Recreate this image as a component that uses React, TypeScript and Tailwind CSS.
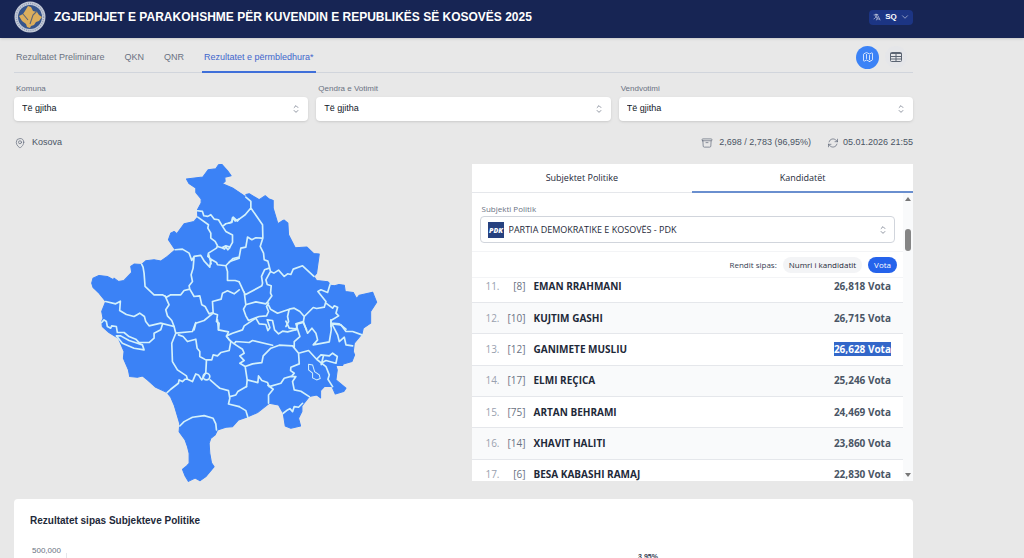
import React, { useState } from 'react';
import {
  HiOutlineArchiveBox,
  HiOutlineArrowPath,
  HiOutlineChevronDown,
  HiOutlineChevronUpDown,
  HiOutlineLanguage,
  HiOutlineMap,
  HiOutlineMapPin,
} from 'react-icons/hi2';

interface Candidate {
  rank: number;
  number: number;
  name: string;
  votes: string;
}

interface SelectFieldProps {
  id: string;
  label: string;
}

const navTabs = ['Rezultatet Preliminare', 'QKN', 'QNR', 'Rezultatet e përmbledhura*'];

const candidates: Candidate[] = [
  { rank: 11, number: 8, name: 'EMAN RRAHMANI', votes: '26,818' },
  { rank: 12, number: 10, name: 'KUJTIM GASHI', votes: '26,715' },
  { rank: 13, number: 12, name: 'GANIMETE MUSLIU', votes: '26,628' },
  { rank: 14, number: 17, name: 'ELMI REÇICA', votes: '25,246' },
  { rank: 15, number: 75, name: 'ARTAN BEHRAMI', votes: '24,469' },
  { rank: 16, number: 14, name: 'XHAVIT HALITI', votes: '23,860' },
  { rank: 17, number: 6, name: 'BESA KABASHI RAMAJ', votes: '22,830' },
];

const Emblem: React.FC = () => (
  <svg viewBox="0 0 32 32" className="size-8" aria-hidden="true">
    <circle cx="16" cy="16" r="15.5" fill="#c3c9d6" />
    <circle cx="16" cy="16" r="13.6" fill="none" stroke="#8f9ab3" strokeWidth="1.4" strokeDasharray="1 1.2" />
    <circle cx="16" cy="16" r="12" fill="#36558c" />
    <path d="M14 5l3 1 2 4 4 1 2 3 3 2-3 4-3 1-2 3-3 1-1 2-3-1-1-3-4-3-3-5 4-2 2-3z" fill="#dcae5c" />
    <path d="M23 10l-4 4-3 9M9 13l5 6" fill="none" stroke="#5d6577" strokeWidth="1.1" />
  </svg>
);

const TableIcon: React.FC = () => (
  <svg viewBox="0 0 12 10" className="w-3" fill="none" stroke="#5b6472" aria-hidden="true">
    <rect x="0.5" y="0.5" width="11" height="9" rx="1" />
    <path d="M0.5 1.5h11" />
    <path d="M0.5 4.5h11M0.5 7h11M6 2v7.5" />
  </svg>
);

// Outline of the country and the borders between municipalities
const KosovoMap: React.FC = () => (
  <svg viewBox="36 13 860 956" className="w-[287px]" role="img" aria-label="Harta e Kosovës">
    <path
      fill="#3b82f6"
      stroke="#3b82f6"
      strokeWidth="3"
      strokeLinejoin="round"
      d="M322 58L371 52 387 30 410 27 418 15 428 14 446 34 456 48 437 53 438 65 430 72 460 85 480 98 502 113 500 104 510 102 540 120 558 108 570 118 582 122 582 145 596 192 608 184 615 181 626 190 628 225 648 264 683 262 703 281 720 283 712 340 704 350 712 362 746 366 755 376 766 378 779 374 795 376 798 395 822 398 832 416 840 406 880 397 892 427 874 455 874 490 852 505 848 522 825 550 822 575 826 585 818 605 792 612 790 617 770 617 774 630 770 660 800 685 793 695 768 702 758 680 735 680 724 692 724 714 712 705 690 710 668 738 668 755 658 775 664 798 635 805 618 798 612 760 598 735 570 730 535 758 502 772 478 780 460 800 440 802 415 810 408 825 395 835 390 850 392 880 397 908 405 920 380 950 363 962 348 954 328 964 318 948 310 928 322 918 330 910 330 880 325 860 318 840 300 815 302 792 285 735 275 712 264 698 230 682 205 660 190 648 175 652 152 650 148 630 133 595 135 575 118 535 90 518 70 500 68 485 72 475 68 455 80 425 60 400 42 383 38 370 42 355 60 347 85 350 103 360 105 355 118 365 135 362 158 338 155 320 165 313 188 314 200 303 225 300 245 304 265 290 288 270 268 240 275 220 285 215 293 222 315 192 345 185 356 172 355 150 366 130 366 118 350 98 350 85 330 72z"
    />
    <g fill="none" stroke="#d3f1fb" strokeWidth="5" strokeLinejoin="round" strokeLinecap="round">
      <path d="M355 153L370 155 374 168 386 170 395 165 405 178 418 180 430 200 440 192 458 188 460 174 468 184 480 178M356 172L388 195 386 205 395 220 395 235 408 245 415 258 412 265 388 280 386 290 398 300 412 308 415 315 440 318 452 305 480 295M430 200L440 215 460 226 460 248 452 262 440 258 428 264 415 260M428 264l8 4 4-6 6 8 6-6M288 270L310 268 330 280 338 302 345 290 365 287 376 305 392 322 394 306 398 300M388 282L396 312M345 290L342 325 336 345 340 365 330 378 332 388 345 410 362 408 368 435 378 440 390 462 402 458 400 425 426 418 430 400 445 393 465 402 480 390M332 388L315 392 305 405 275 405 262 412 250 405 225 405 198 380 195 340 192 322 188 314M440 318L445 335 445 362 468 362 480 366M80 425L110 432 124 424 122 452 142 464 165 470 182 460 196 470 200 485 210 498 245 490 285 500M258 408L270 435 260 450 265 468 278 482 285 500" />
      <path d="M345 510L350 490 375 482 402 460 415 465 412 485 420 490 418 510" />
      <g transform="translate(450 0)">
        <path d="M30 178L25 184 12 172 8 186 0 190M30 178L48 165 65 145 65 125 50 112M30 292L35 265 50 262 55 232 68 240 80 234 97 235M65 145L100 195 101 235 93 260 103 280 105 300 116 304 124 335 134 340 148 331 165 350 175 342 185 344 192 328 220 318 254 350M30 292L12 296 0 308M30 366L48 405 98 378 100 370 97 350 106 330 120 325M124 335L110 360 114 374 126 378 124 400 128 408 116 425 110 432 80 426 52 434M45 396L50 435 43 448 50 468 58 482 90 470 112 468 118 455 112 440 118 430M118 436L124 448 145 460 180 448 195 445 212 455 225 470 252 443 262 446 285 442 290 425 266 395 275 390 295 398 303 372M290 430L310 445 315 438 325 442 320 460 328 468 305 482 305 500M180 448L175 470 178 485 170 500M225 470L222 488 205 492 200 510M222 488L232 510M305 490L330 492 350 508" />
      </g>
      <g transform="translate(0 480)">
        <path d="M68 8L75 0 82 5 85 20 95 25 98 18 112 20 115 38 135 38 150 50 170 58 180 68 210 68 225 55 225 40 245 30 250 14M112 48L125 48 150 62 175 70 190 75 195 90 165 85 130 70zM285 20L290 40 340 35 350 8M290 40L278 70 280 125 295 150 322 168 325 178 318 178 310 185 300 180 298 190 275 208 264 218M298 45L312 50 325 65 350 58 354 85 362 95 362 110 380 120 398 120 402 105 415 108 425 98 450 92 455 65 442 50 448 36 418 30 415 0M325 178L340 185 350 162 358 165 368 180 380 158 382 120M393 180L410 195 422 205 448 212 452 235 448 252 480 260M302 318L315 305 340 292 375 287 402 295 410 312 412 330M452 230L470 225 476 215 502 200" />
        <circle cx="382" cy="170" r="10" />
      </g>
      <g transform="translate(450 480)">
        <path d="M30 260L50 272 56 292M52 200L54 180 48 140 32 130 45 122 32 108 45 100 40 88 15 72 20 65 60 68 70 62 130 76M15 72L0 60-8 48 10 40 40 30 45 18 80-5 90 12 110 14 116 32 122 24 114 0 130 2 136 30 148 42 160 34 175 36 205 28 200 12 222 5M170 4L180 25 204 28M48 140L70 132 98 128 102 108 125 85 150 76 190 78 208 100 210 132 185 142 184 152 195 160 186 170 200 170 190 185 195 210 215 214 240 230M54 180L86 188 88 168 98 182 115 188 120 200 155 190 165 175 190 168M116 196L132 208 118 225 118 250M205 28L212 50 195 65 195 82M222 5L235 40 248 25 260 40 265 60 252 75 300 66 306 30 305 0M308 12L325 45 330 65 345 52 350 75 370 78M308 12L335 15 350 35 370 35 398 45M195 82L190 78M208 100L238 92 262 118 275 105 300 108 310 100 324 110 320 130 290 122 275 130M262 118L290 140 300 165 296 178 310 200M276 134L282 110M162 280L175 270 182 266 190 275 195 260 208 262 220 250" />
        <path strokeWidth="3" d="M238 133L250 135 256 155 270 165 273 176 262 180 250 174 250 160 238 150z" />
      </g>
    </g>
  </svg>
);

const SelectField: React.FC<SelectFieldProps> = ({ id, label }) => (
  <div>
    <label htmlFor={id} className="block pl-0.5 text-[8px] leading-4 text-gray-500">
      {label}
    </label>
    <div className="relative">
      <select
        id={id}
        className="block h-6 w-full appearance-none rounded bg-white px-2 text-[9px] text-gray-900 shadow-sm"
      >
        <option>Të gjitha</option>
      </select>
      <HiOutlineChevronUpDown className="pointer-events-none absolute top-1.5 right-1.5 size-3 text-gray-500" />
    </div>
  </div>
);

const CandidatesPanel: React.FC = () => {
  // Column by which the list is sorted
  const [sortBy, setSortBy] = useState<'number' | 'votes'>('votes');

  return (
    <section className="flex h-[317px] flex-col overflow-hidden bg-white font-['Open_Sans','Noto_Sans',sans-serif]">
      <div className="grid h-[29px] shrink-0 grid-cols-2 text-[9px] font-medium text-gray-800">
        <button type="button" className="border-b border-gray-200">
          Subjektet Politike
        </button>
        <button type="button" className="border-b-2 border-[#6a8fcf]">
          Kandidatët
        </button>
      </div>

      <div className="flex min-h-0 flex-1">
        <div className="min-w-0 flex-1 overflow-hidden">
          {/* Party filter */}
          <div className="border-b border-gray-100 px-2 pt-[9px] pb-2">
            <label htmlFor="party" className="block pl-0.5 text-[8px] leading-[14px] text-gray-500">
              Subjekti Politik
            </label>
            <div className="relative">
              <select
                id="party"
                className="block h-[27px] w-full appearance-none rounded border border-gray-300 bg-white pl-7 text-[9px] font-medium text-gray-800"
              >
                <option>PARTIA DEMOKRATIKE E KOSOVËS - PDK</option>
              </select>
              <svg viewBox="0 0 16 16" className="pointer-events-none absolute top-1.5 left-2 size-4" aria-hidden="true">
                <rect width="16" height="16" fill="#26417f" />
                <text
                  x="8"
                  y="11"
                  textAnchor="middle"
                  fill="#ffffff"
                  fontSize="7"
                  fontWeight="800"
                  fontStyle="italic"
                >
                  PDK
                </text>
              </svg>
              <HiOutlineChevronUpDown className="pointer-events-none absolute top-2 right-1.5 size-3 text-gray-500" />
            </div>
          </div>

          {/* Sort buttons */}
          <div className="relative z-10 flex h-[26px] items-center justify-end gap-1.5 border-b border-gray-100 bg-white pr-1.5 text-[8px] text-gray-700">
            <span>Rendit sipas:</span>
            <button
              type="button"
              aria-pressed={sortBy === 'number'}
              onClick={() => setSortBy('number')}
              className="h-4 rounded-full bg-gray-100 px-1.5 font-medium text-gray-800"
            >
              Numri i kandidatit
            </button>
            <button
              type="button"
              aria-pressed={sortBy === 'votes'}
              onClick={() => setSortBy('votes')}
              className="h-4 rounded-full bg-[#2563eb] px-1.5 font-medium text-white"
            >
              Vota
            </button>
          </div>

          <table className="-mt-1.5 h-[219px] w-full border-collapse text-[10px]">
            <tbody>
              {candidates.map((candidate) => (
                <tr key={candidate.rank} className="border-b border-gray-200 even:bg-gray-50">
                  <td className="w-7 text-right text-gray-400">{candidate.rank}.</td>
                  <td className="w-[26px] text-right text-gray-500">[{candidate.number}]</td>
                  <td className="pl-2 font-bold text-gray-800">{candidate.name}</td>
                  <td className="pr-3 text-right font-bold text-gray-600">
                    <span className={candidate.rank === 13 ? 'bg-[#3367c9] text-white' : ''}>
                      {candidate.votes} Vota
                    </span>
                  </td>
                </tr>
              ))}
            </tbody>
          </table>
        </div>

        {/* Scrollbar */}
        <div className="flex w-2.5 shrink-0 flex-col items-center bg-gray-50 py-1" aria-hidden="true">
          <svg viewBox="0 0 6 4" className="w-1.5">
            <path d="M3 0l3 4H0z" fill="#777777" />
          </svg>
          <div className="mt-7 h-[22px] w-1.5 rounded-full bg-[#858585]" />
          <svg viewBox="0 0 6 4" className="mt-auto w-1.5">
            <path d="M3 4L0 0h6z" fill="#777777" />
          </svg>
        </div>
      </div>
    </section>
  );
};

const App: React.FC = () => {
  const [activeTab, setActiveTab] = useState<string>(navTabs[3]);

  return (
    <div className="h-screen overflow-hidden bg-[#e8e8e8] font-['Liberation_Sans',Arial,sans-serif] text-[9px] text-gray-600">
      <header className="bg-[#172554] shadow">
        <div className="flex h-[38px] max-w-[927px] items-center px-3.5 pb-1">
          <Emblem />
          <h1 className="ml-2 text-[12px] font-bold text-white">
            ZGJEDHJET E PARAKOHSHME PËR KUVENDIN E REPUBLIKËS SË KOSOVËS 2025
          </h1>
          <button
            type="button"
            className="ml-auto flex h-[15px] w-11 items-center justify-center gap-1 rounded bg-[#1c3584] text-[8px] font-bold text-white"
          >
            <HiOutlineLanguage className="size-2" />
            SQ
            <HiOutlineChevronDown className="size-2" />
          </button>
        </div>
      </header>

      <main className="max-w-[927px] px-3.5">
        <nav className="flex h-[35px] border-b border-gray-300">
          <div className="flex gap-4">
            {navTabs.map((tab) => (
              <a
                key={tab}
                href="#"
                onClick={() => setActiveTab(tab)}
                className={
                  tab === activeTab
                    ? '-mb-px flex items-center border-b-2 border-[#3f6fd9] px-0.5 pt-1.5 text-[#3f66cc]'
                    : '-mb-px flex items-center border-b-2 border-transparent px-0.5 pt-1.5 text-gray-500'
                }
              >
                {tab}
              </a>
            ))}
          </div>
          <div className="ml-auto flex items-center gap-1.5 pt-1 pr-1.5">
            <button
              type="button"
              aria-label="Harta"
              className="flex size-[23px] items-center justify-center rounded-full bg-[#3b82f6] text-white"
            >
              <HiOutlineMap className="size-3" />
            </button>
            <button
              type="button"
              aria-label="Tabela"
              className="flex size-[22px] items-center justify-center rounded-full bg-[#e5e6e9]"
            >
              <TableIcon />
            </button>
          </div>
        </nav>

        <div className="mt-2 grid grid-cols-3 gap-2">
          <SelectField id="municipality" label="Komuna" />
          <SelectField id="center" label="Qendra e Votimit" />
          <SelectField id="station" label="Vendvotimi" />
        </div>

        <div className="mt-4 mb-[15px] flex h-3 items-center">
          <HiOutlineMapPin className="mr-1.5 size-3 text-gray-500" />
          <span>Kosova</span>
          <HiOutlineArchiveBox className="mr-1.5 ml-auto size-3 text-gray-500" />
          <span>2,698 / 2,783 (96,95%)</span>
          <HiOutlineArrowPath className="mr-1 ml-4 size-3 text-gray-500" />
          <span>05.01.2026 21:55</span>
        </div>

        <div className="grid grid-cols-2 gap-4">
          <div className="flex justify-center">
            <KosovoMap />
          </div>
          <CandidatesPanel />
        </div>

        <section className="mt-4 h-40 rounded bg-white px-4 pt-4">
          <h2 className="text-[10px] leading-3 font-bold text-gray-800">Rezultatet sipas Subjekteve Politike</h2>
          <div className="mt-[18px] flex h-20">
            <span className="w-9 pl-0.5 text-[8px] text-gray-500">500,000</span>
            <div className="mt-2 grid flex-1 grid-cols-5 border-l border-gray-200 text-center text-[7px] leading-2 font-bold text-gray-700">
              <span className="col-start-4">3,95%</span>
            </div>
          </div>
        </section>
      </main>
    </div>
  );
};

export default App;
